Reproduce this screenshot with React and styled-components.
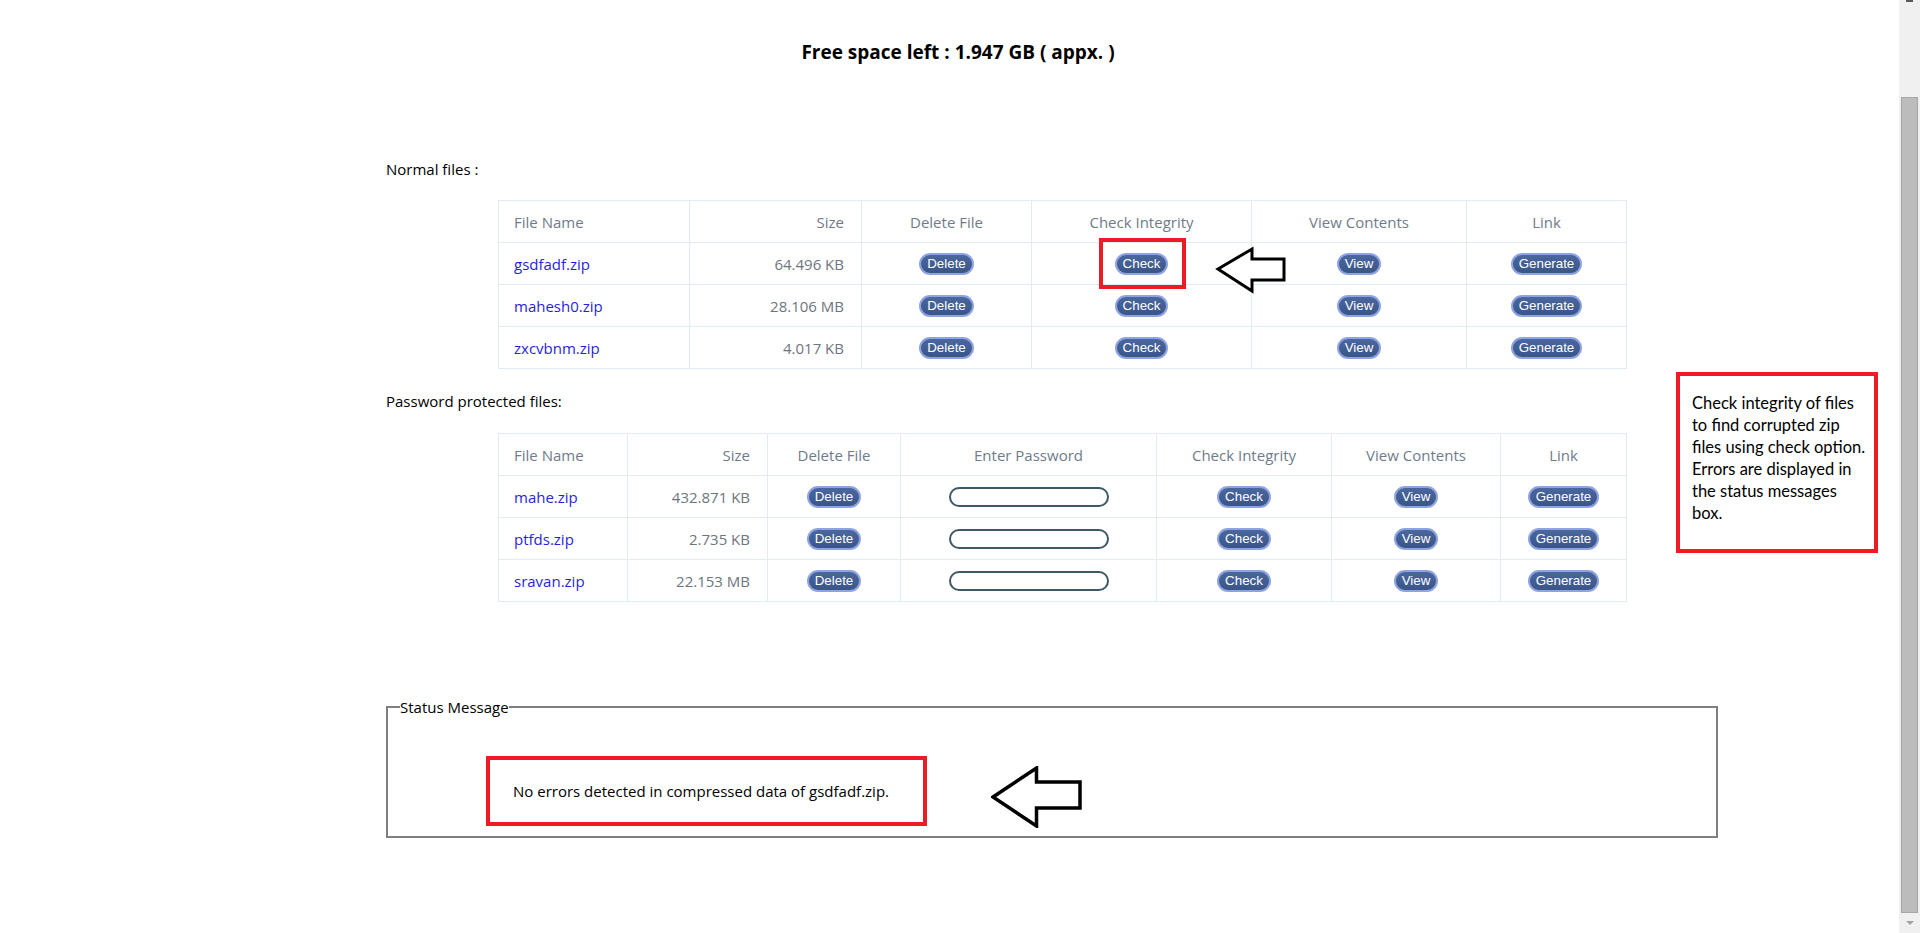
import React from "react";
import styled, { createGlobalStyle } from "styled-components";

const GlobalStyle = createGlobalStyle`
  html, body {
    margin: 0;
    padding: 0;
    background: #fff;
  }
  body {
    font-family: "Open Sans", "Liberation Sans", Arial, sans-serif;
    color: #000;
  }
`;

const Page = styled.div`
  display: flex;
  height: 100vh;
  overflow: hidden;
  background: #fff;
`;

const Main = styled.main`
  flex: 1;
  position: relative;
  padding-top: 40px;
`;

const Title = styled.h1`
  margin: 0;
  padding-left: 17px;
  text-align: center;
  font-size: 19px;
  line-height: 25px;
  font-weight: 700;
`;

const Content = styled.div`
  width: 1332px;
  margin-left: 386px;
`;

const SectionLabel = styled.div`
  margin-top: ${(p) => p.$gap}px;
  font-size: 15px;
  line-height: 20px;
`;

const FileTable = styled.table`
  margin: ${(p) => p.$gap}px 0 0 112px;
  width: 1128px;
  table-layout: fixed;
  border-collapse: collapse;
  font-size: 15px;

  tr {
    height: 42px;
  }
`;

const Th = styled.th`
  border: 1px solid #e2eaf4;
  padding: ${(p) => (p.$align === "left" ? "0 0 0 15px" : p.$align === "right" ? "0 17px 0 0" : "0")};
  text-align: ${(p) => p.$align || "center"};
  font-weight: 400;
  color: #6f7b8b;
`;

const Td = styled.td`
  border: 1px solid #e2eaf4;
  padding: ${(p) => (p.$align === "left" ? "0 0 0 15px" : p.$align === "right" ? "0 17px 0 0" : "0")};
  text-align: ${(p) => p.$align || "center"};
  color: ${(p) => (p.$muted ? "#6d7580" : "#000")};
  vertical-align: middle;
`;

const FileLink = styled.a`
  color: #2a1fd8;
  text-decoration: none;
  cursor: pointer;
`;

const PillButton = styled.button`
  font-family: "Liberation Sans", Arial, sans-serif;
  font-size: 13.33px;
  line-height: 16px;
  height: 22px;
  padding: 0 6px;
  color: #fff;
  background: linear-gradient(#4a679f, #3a5587);
  border: 2px solid #8ea3e2;
  border-radius: 11px;
  cursor: pointer;
  vertical-align: middle;
`;

const PasswordInput = styled.input`
  width: 160px;
  height: 20px;
  box-sizing: border-box;
  border: 2px solid #3e5867;
  border-radius: 10px;
  padding: 0 8px;
  outline: none;
  vertical-align: middle;
`;

const Highlight = styled.span`
  position: relative;
  display: inline-flex;
  vertical-align: middle;

  &::before {
    content: "";
    position: absolute;
    top: -15px;
    bottom: -14px;
    left: -16px;
    right: -18px;
    border: 4px solid #ed1c24;
    pointer-events: none;
  }
`;

const PointerArrow = styled.svg`
  position: absolute;
  left: 101px;
  top: -6px;
  overflow: visible;
`;

const StatusBox = styled.fieldset`
  margin: 95px 0 0;
  padding: 39px 0 8px 12px;
  border: 2px solid #7f7f7f;
  min-width: 0;
`;

const StatusLegend = styled.legend`
  padding: 0;
  margin: 0;
  font-size: 15px;
  line-height: 20px;
`;

const StatusRow = styled.div`
  display: flex;
  align-items: flex-start;
  padding-left: 86px;
`;

const MessageBox = styled.div`
  width: 441px;
  height: 70px;
  box-sizing: border-box;
  border: 4px solid #ed1c24;
  padding-left: 23px;
  display: flex;
  align-items: center;
  font-size: 15px;
`;

const BigArrow = styled.svg`
  margin: 10px 0 0 64px;
  flex: none;
`;

const Callout = styled.div`
  position: absolute;
  left: 1676px;
  top: 372px;
  width: 202px;
  height: 181px;
  box-sizing: border-box;
  border: 4px solid #ed1c24;
  padding: 16px 0 0 12px;
  font-family: Lato, "Open Sans", sans-serif;
  font-size: 16.5px;
  line-height: 22px;
  color: #000;
`;

const ScrollTrack = styled.div`
  width: 21px;
  flex: none;
  background: #f0f0f0;
  display: flex;
  flex-direction: column;
  align-items: center;
`;

const UpStub = styled.div`
  width: 7px;
  height: 2px;
  background: #5a5a5a;
`;

const Thumb = styled.div`
  margin-top: 95px;
  width: 17px;
  height: 816px;
  box-sizing: border-box;
  background: #bcbcbc;
  border: 1px solid #a6a6a6;
`;

const DownArrow = styled.div`
  margin-top: 8px;
  width: 0;
  height: 0;
  border-left: 4px solid transparent;
  border-right: 4px solid transparent;
  border-top: 4px solid #a3a3a3;
`;

const normalFiles = [
  { name: "gsdfadf.zip", size: "64.496 KB" },
  { name: "mahesh0.zip", size: "28.106 MB" },
  { name: "zxcvbnm.zip", size: "4.017 KB" },
];

const protectedFiles = [
  { name: "mahe.zip", size: "432.871 KB" },
  { name: "ptfds.zip", size: "2.735 KB" },
  { name: "sravan.zip", size: "22.153 MB" },
];

function App() {
  return (
    <>
      <GlobalStyle />
      <Page>
        <Main>
          <Title>Free space left : 1.947 GB ( appx. )</Title>
          <Content>
            <SectionLabel $gap={94}>Normal files :</SectionLabel>
            <FileTable $gap={21}>
              <colgroup>
                <col style={{ width: 191 }} />
                <col style={{ width: 172 }} />
                <col style={{ width: 170 }} />
                <col style={{ width: 220 }} />
                <col style={{ width: 215 }} />
                <col style={{ width: 160 }} />
              </colgroup>
              <thead>
                <tr>
                  <Th $align="left">File Name</Th>
                  <Th $align="right">Size</Th>
                  <Th>Delete File</Th>
                  <Th>Check Integrity</Th>
                  <Th>View Contents</Th>
                  <Th>Link</Th>
                </tr>
              </thead>
              <tbody>
                {normalFiles.map((f, i) => (
                  <tr key={f.name}>
                    <Td $align="left"><FileLink>{f.name}</FileLink></Td>
                    <Td $align="right" $muted>{f.size}</Td>
                    <Td><PillButton>Delete</PillButton></Td>
                    <Td>
                      {i === 0 ? (
                        <Highlight>
                          <PillButton>Check</PillButton>
                          <PointerArrow width="70" height="46" viewBox="0 0 70 46">
                            <polygon
                              points="2,22 36,2 36,12 68,12 68,33 36,33 36,44"
                              fill="#fff"
                              stroke="#000"
                              strokeWidth="3"
                            />
                          </PointerArrow>
                        </Highlight>
                      ) : (
                        <PillButton>Check</PillButton>
                      )}
                    </Td>
                    <Td><PillButton>View</PillButton></Td>
                    <Td><PillButton>Generate</PillButton></Td>
                  </tr>
                ))}
              </tbody>
            </FileTable>

            <SectionLabel $gap={22}>Password protected files:</SectionLabel>
            <FileTable $gap={22}>
              <colgroup>
                <col style={{ width: 129 }} />
                <col style={{ width: 140 }} />
                <col style={{ width: 133 }} />
                <col style={{ width: 256 }} />
                <col style={{ width: 175 }} />
                <col style={{ width: 169 }} />
                <col style={{ width: 126 }} />
              </colgroup>
              <thead>
                <tr>
                  <Th $align="left">File Name</Th>
                  <Th $align="right">Size</Th>
                  <Th>Delete File</Th>
                  <Th>Enter Password</Th>
                  <Th>Check Integrity</Th>
                  <Th>View Contents</Th>
                  <Th>Link</Th>
                </tr>
              </thead>
              <tbody>
                {protectedFiles.map((f) => (
                  <tr key={f.name}>
                    <Td $align="left"><FileLink>{f.name}</FileLink></Td>
                    <Td $align="right" $muted>{f.size}</Td>
                    <Td><PillButton>Delete</PillButton></Td>
                    <Td><PasswordInput type="password" /></Td>
                    <Td><PillButton>Check</PillButton></Td>
                    <Td><PillButton>View</PillButton></Td>
                    <Td><PillButton>Generate</PillButton></Td>
                  </tr>
                ))}
              </tbody>
            </FileTable>

            <StatusBox>
              <StatusLegend>Status Message</StatusLegend>
              <StatusRow>
                <MessageBox>No errors detected in compressed data of gsdfadf.zip.</MessageBox>
                <BigArrow width="92" height="62" viewBox="0 0 92 62">
                  <polygon
                    points="2,31 45.5,2 45.5,16 89,16 89,42 45.5,42 45.5,60"
                    fill="#fff"
                    stroke="#000"
                    strokeWidth="3.5"
                  />
                </BigArrow>
              </StatusRow>
            </StatusBox>
          </Content>

          <Callout>
            Check integrity of files
            <br />
            to find corrupted zip
            <br />
            files using check option.
            <br />
            Errors are displayed in
            <br />
            the status messages
            <br />
            box.
          </Callout>
        </Main>
        <ScrollTrack>
          <UpStub />
          <Thumb />
          <DownArrow />
        </ScrollTrack>
      </Page>
    </>
  );
}

export default App;
